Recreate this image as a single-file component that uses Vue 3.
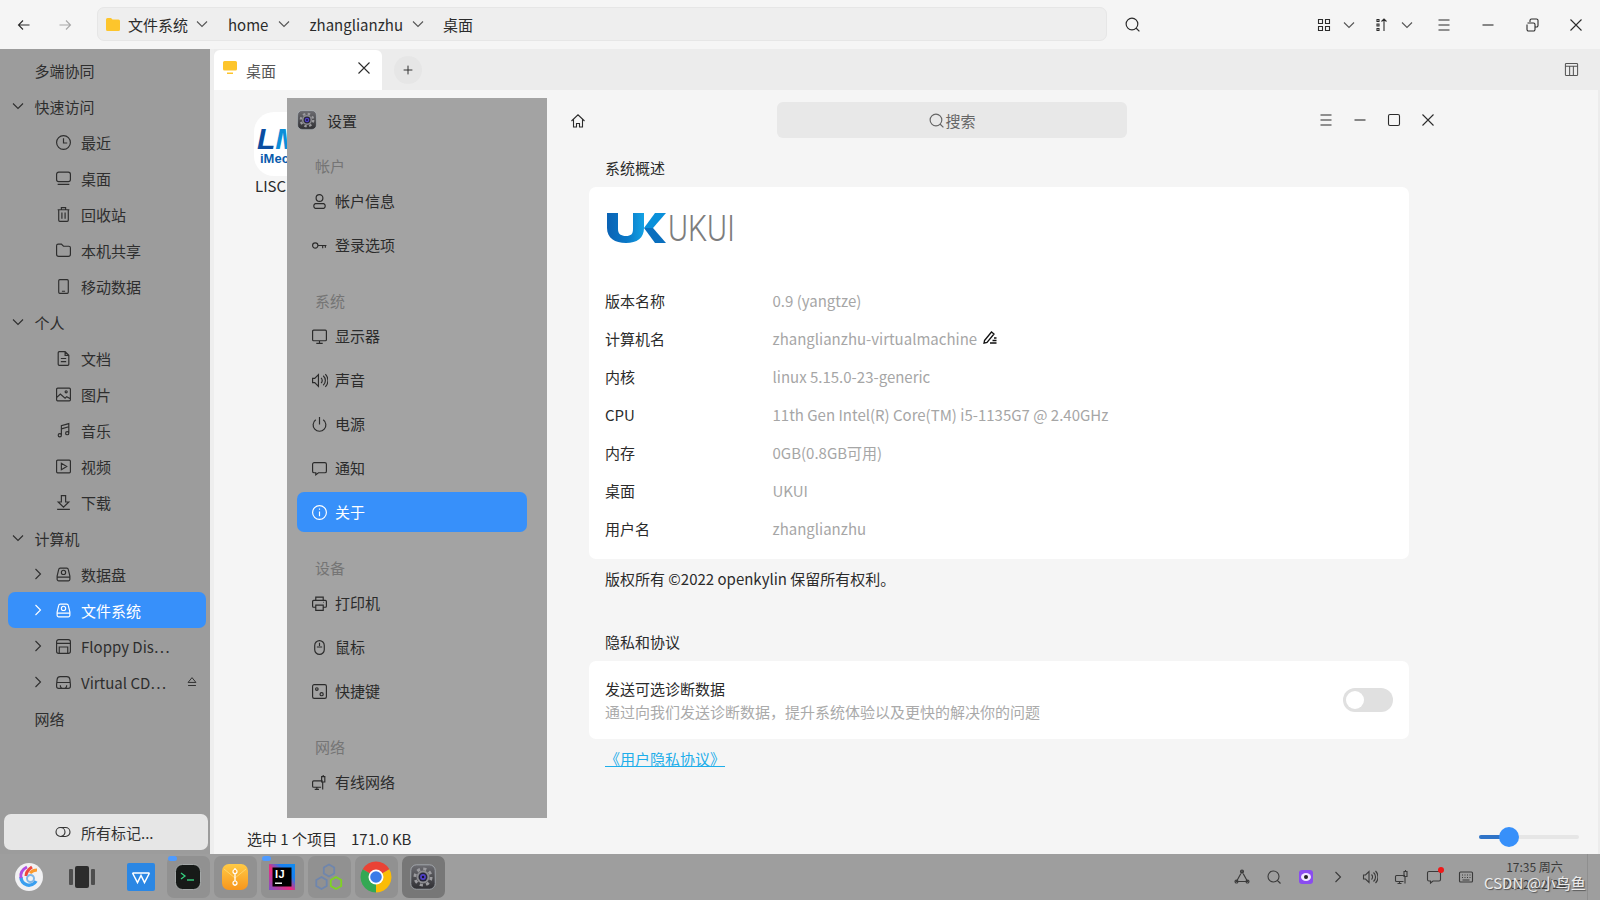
<script setup>
const icons = {
  back: 'M13.5 8H2.5M7 3.5L2.5 8L7 12.5',
  fwd: 'M2.5 8H13.5M9 3.5L13.5 8L9 12.5',
  down: 'M3 5.5l5 5 5-5',
  right: 'M5.5 3l5 5-5 5',
  close: 'M2.5 2.5l11 11M13.5 2.5l-11 11',
  menu: 'M2.5 3h11M2.5 8h11M2.5 13h11',
  min: 'M2.5 8h11',
  max: 'M4 2.5h8a1.5 1.5 0 0 1 1.5 1.5v8a1.5 1.5 0 0 1-1.5 1.5H4A1.5 1.5 0 0 1 2.5 12V4A1.5 1.5 0 0 1 4 2.5z',
  restore: 'M3.5 6h6a1.5 1.5 0 0 1 1.5 1.5v5A1.5 1.5 0 0 1 9.500 14h-5A1.500 1.500 0 0 1 3 12.500V7.500M6 5V3.500A1.500 1.500 0 0 1 7.500 2h5A1.500 1.500 0 0 1 14 3.500v5a1.500 1.500 0 0 1-1.500 1.500H11',
  search: 'M7.500 2a5.500 5.500 0 1 0 0 11a5.500 5.500 0 1 0 0-11M11.500 11.500L14.500 14.500',
  grid: 'M2.500 2.500h4v4h-4zM9.500 2.500h4v4h-4zM2.500 9.500h4v4h-4zM9.500 9.500h4v4h-4z',
  sort: 'M3 2.500h2v2H3zM3 7h2v2H3zM3 11.500h2v2H3zM10 14V2M7.500 4.500L10 2l2.500 2.500',
  plus: 'M8 3v10M3 8h10',
  columns: 'M2.500 1.500h11a1 1 0 0 1 1 1v11a1 1 0 0 1-1 1h-11a1 1 0 0 1-1-1v-11a1 1 0 0 1 1-1zM1.500 4.500h13M6 4.500v10M10 4.500v10',
  clock: 'M8 1.500a6.500 6.500 0 1 0 0 13a6.500 6.500 0 1 0 0-13M8 4v4.500h3.500',
  desktop: 'M3.500 2h9a2 2 0 0 1 2 2v5a2 2 0 0 1-2 2h-9a2 2 0 0 1-2-2V4a2 2 0 0 1 2-2zM2.500 13.500h11',
  trash: 'M2.500 3.500h11M6 3V1.500h4V3M3.500 3.500v10a1 1 0 0 0 1 1h7a1 1 0 0 0 1-1v-10M6.500 6v6M9.500 6v6',
  folder: 'M1.500 3.500A1.500 1.500 0 0 1 3 2h3l2 2h5a1.500 1.500 0 0 1 1.500 1.500v6a2 2 0 0 1-2 2h-9a2 2 0 0 1-2-2z',
  phone: 'M4.500 1.500h7a1 1 0 0 1 1 1v11a1 1 0 0 1-1 1h-7a1 1 0 0 1-1-1v-11a1 1 0 0 1 1-1zM6.500 12.500h3',
  doc: 'M3 2.500a1 1 0 0 1 1-1h5.500l3.500 3.500v8.500a1 1 0 0 1-1 1H4a1 1 0 0 1-1-1zM9.500 1.500V5H13M5.500 8h5M5.500 11h5',
  image: 'M2.500 2h11a1 1 0 0 1 1 1v10a1 1 0 0 1-1 1h-11a1 1 0 0 1-1-1V3a1 1 0 0 1 1-1zM1.500 11l3.500-3.500 4.500 4 1.500-1.500 3.500 2M10.500 4.500a1 1 0 1 0 0 2a1 1 0 1 0 0-2',
  music: 'M6 12.500V3.500l7-2v9M6 6.500l7-2M6 12.500a1.500 1.500 0 1 1-3 0a1.500 1.500 0 1 1 3 0M13 10.500a1.500 1.500 0 1 1-3 0a1.500 1.500 0 1 1 3 0',
  video: 'M2.500 2h11a1 1 0 0 1 1 1v10a1 1 0 0 1-1 1h-11a1 1 0 0 1-1-1V3a1 1 0 0 1 1-1zM6 5v6l5-3z',
  download: 'M6 1.500h4v6h3l-5 5-5-5h3zM2 14.500h12',
  disk: 'M5 2h6a1.500 1.500 0 0 1 1.500 1.200L14 9.500v3a1.500 1.500 0 0 1-1.500 1.500h-9A1.500 1.500 0 0 1 2 12.500v-3l1.500-6.300A1.500 1.500 0 0 1 5 2zM2 10.500h12M8 4a2 2 0 1 0 0 4a2 2 0 1 0 0-4',
  floppy: 'M3.500 1.500h9a2 2 0 0 1 2 2v9a2 2 0 0 1-2 2h-9a2 2 0 0 1-2-2v-9a2 2 0 0 1 2-2zM1.500 5h13M4 14.500V8.500h8v6',
  cd: 'M5 2.500h6a3 3 0 0 1 3 2.500l.5 5v1.500a2 2 0 0 1-2 2h-9a2 2 0 0 1-2-2V10l.5-5A3 3 0 0 1 5 2.500zM1.500 8h13M5 10.500a3 3 0 0 0 6 0',
  eject: 'M8 3l4.500 5.500h-9zM3.500 12h9',
  tags: 'M5.500 3.500h5a4.500 4.500 0 0 1 0 9h-5a4.500 4.500 0 0 1 0-9M5.500 3.500a4.500 4.500 0 0 1 0 9',
  user: 'M8 1.500a3.200 3.200 0 1 0 0 6.400a3.200 3.200 0 1 0 0-6.400M4 10h8a2.500 2.500 0 0 1 0 4.500H4A2.500 2.500 0 0 1 4 10z',
  key: 'M4 5.500a2.500 2.500 0 1 0 0 5a2.500 2.500 0 1 0 0-5M6.500 8h8M11 8v2.500M13.500 8v2',
  monitor: 'M2.500 2h11a1 1 0 0 1 1 1v8a1 1 0 0 1-1 1h-11a1 1 0 0 1-1-1V3a1 1 0 0 1 1-1zM8 12v2M5 14.500h6',
  sound: 'M1.500 6h2l3.500-3.500v11L3.500 10h-2zM9.500 5.500a3.500 3.500 0 0 1 0 5M11.500 3.500a6 6 0 0 1 0 9M13.500 2a8.500 8.500 0 0 1 0 12',
  power: 'M8 1v7M4.500 3.500a6 6 0 1 0 7 0',
  message: 'M3 2.500h10a1.500 1.500 0 0 1 1.500 1.500v6.500a1.500 1.500 0 0 1-1.500 1.500H7l-2.500 2v-2H3a1.500 1.500 0 0 1-1.500-1.500V4A1.500 1.500 0 0 1 3 2.500z',
  info: 'M8 1.500a6.500 6.500 0 1 0 0 13a6.500 6.500 0 1 0 0-13M8 7v4.500M8 4.300v1',
  printer: 'M4.500 5V2h7v3M4.500 11.500h-2a1 1 0 0 1-1-1V6a1 1 0 0 1 1-1h11a1 1 0 0 1 1 1v4.500a1 1 0 0 1-1 1h-2M4.500 9.500h7v5h-7zM11.500 7h.5',
  mouse: 'M8 1.500a4.500 4.500 0 0 1 4.500 4.500v4a4.500 4.500 0 0 1-9 0V6A4.500 4.500 0 0 1 8 1.500zM8 3.500v3M5.500 7.500h5',
  shortcut: 'M3 1.500h10a1.500 1.500 0 0 1 1.500 1.500v10a1.500 1.500 0 0 1-1.500 1.500H3A1.500 1.500 0 0 1 1.500 13V3A1.500 1.500 0 0 1 3 1.500zM5.500 4.500a1.200 1.200 0 1 0 0 2.400a1.200 1.200 0 1 0 0-2.400M10 9a1.500 1.500 0 1 0 0 3a1.500 1.500 0 1 0 0-3',
  wired: 'M11 6.500H2.500a1 1 0 0 0-1 1v4a1 1 0 0 0 1 1h7M5.500 12.500v2M3.500 14.500h4M11 8v6.500M10 2.500h3v5h-3zM11.500 2.500V1',
  home: 'M1.500 8L8 1.800 14.500 8M3.500 6.500V14h3v-3.500h3V14h3V6.500',
  edit: 'M2.500 11.500l7-8.500 2.500 2-7 8.500-3 .7zM8 14h6.500M10.500 11.500h4M12 9h2.500',
  triangle: 'M8 2.500L2.500 12.500h11zM8 1a1.500 1.500 0 1 0 0 3a1.500 1.500 0 1 0 0-3M2.500 11a1.500 1.500 0 1 0 0 3a1.500 1.500 0 1 0 0-3M13.500 11a1.500 1.500 0 1 0 0 3a1.500 1.500 0 1 0 0-3',
  keyboard: 'M2.500 3h11a1 1 0 0 1 1 1v8a1 1 0 0 1-1 1h-11a1 1 0 0 1-1-1V4a1 1 0 0 1 1-1zM4 6h1M6.500 6h1M9 6h1M11.500 6h1M4 8.500h1M6.500 8.500h1M9 8.500h1M11.500 8.500h1M4.500 11h7'
}

const tree = [
  { t: '多端协同', level: 0 },
  { t: '快速访问', level: 0, chevron: 'down' },
  { t: '最近', level: 1, icon: 'clock' },
  { t: '桌面', level: 1, icon: 'desktop' },
  { t: '回收站', level: 1, icon: 'trash' },
  { t: '本机共享', level: 1, icon: 'folder' },
  { t: '移动数据', level: 1, icon: 'phone' },
  { t: '个人', level: 0, chevron: 'down' },
  { t: '文档', level: 1, icon: 'doc' },
  { t: '图片', level: 1, icon: 'image' },
  { t: '音乐', level: 1, icon: 'music' },
  { t: '视频', level: 1, icon: 'video' },
  { t: '下载', level: 1, icon: 'download' },
  { t: '计算机', level: 0, chevron: 'down' },
  { t: '数据盘', level: 1, icon: 'disk', chevron: 'right' },
  { t: '文件系统', level: 1, icon: 'disk', chevron: 'right', active: true },
  { t: 'Floppy Dis⋯', level: 1, icon: 'floppy', chevron: 'right' },
  { t: 'Virtual CD⋯', level: 1, icon: 'cd', chevron: 'right', eject: true },
  { t: '网络', level: 0 }
]

const groups = [
  { title: '帐户', items: [{ t: '帐户信息', icon: 'user' }, { t: '登录选项', icon: 'key' }] },
  { title: '系统', items: [
    { t: '显示器', icon: 'monitor' }, { t: '声音', icon: 'sound' }, { t: '电源', icon: 'power' },
    { t: '通知', icon: 'message' }, { t: '关于', icon: 'info', active: true }
  ] },
  { title: '设备', items: [{ t: '打印机', icon: 'printer' }, { t: '鼠标', icon: 'mouse' }, { t: '快捷键', icon: 'shortcut' }] },
  { title: '网络', items: [{ t: '有线网络', icon: 'wired' }] }
]

const rows = [
  ['版本名称', '0.9 (yangtze)'],
  ['计算机名', 'zhanglianzhu-virtualmachine', true],
  ['内核', 'linux 5.15.0-23-generic'],
  ['CPU', '11th Gen Intel(R) Core(TM) i5-1135G7 @ 2.40GHz'],
  ['内存', '0GB(0.8GB可用)'],
  ['桌面', 'UKUI'],
  ['用户名', 'zhanglianzhu']
]

const crumbs = ['home', 'zhanglianzhu']
const tray = ['triangle', 'search', null, 'right', 'sound', 'wired', 'message', 'keyboard']
</script>

<template>
  <div class="screen">
    <svg class="defs" aria-hidden="true">
      <defs>
        <linearGradient id="gearBg" x1="0" y1="0" x2="0" y2="1">
          <stop offset="0" stop-color="#6d6d72" />
          <stop offset="1" stop-color="#2f2f33" />
        </linearGradient>
        <linearGradient id="ukU" x1="0" y1="0" x2="1" y2="0">
          <stop offset="0" stop-color="#0a62b4" />
          <stop offset="0.55" stop-color="#0a79c8" />
          <stop offset="1" stop-color="#14a2e4" />
        </linearGradient>
        <linearGradient id="mailBg" x1="0" y1="0" x2="0" y2="1">
          <stop offset="0" stop-color="#ffca45" />
          <stop offset="1" stop-color="#f8961c" />
        </linearGradient>
        <linearGradient id="ijBg" x1="0" y1="1" x2="1" y2="0">
          <stop offset="0" stop-color="#7a52c8" />
          <stop offset="0.45" stop-color="#ee2a7b" />
          <stop offset="0.7" stop-color="#1a7ff0" />
          <stop offset="1" stop-color="#0d8cf2" />
        </linearGradient>
        <symbol id="gear" viewBox="0 0 32 32">
          <rect x="1" y="1" width="30" height="30" rx="7" fill="url(#gearBg)" stroke="#b9c0c8" stroke-width="0.8" />
          <circle cx="16" cy="16" r="10" fill="none" stroke="#9a9a9e" stroke-width="3.500" stroke-dasharray="3.900 3.950" />
          <circle cx="16" cy="16" r="8" fill="#8b8b8f" />
          <circle cx="16" cy="16" r="5.500" fill="#26263a" />
          <circle cx="16" cy="16" r="3.600" fill="#5040c8" />
          <circle cx="16" cy="16" r="1.500" fill="#16162a" />
        </symbol>
      </defs>
    </svg>

    <header class="topbar">
      <svg class="ic nav-back" viewBox="0 0 16 16"><path :d="icons.back" /></svg>
      <svg class="ic nav-fwd" viewBox="0 0 16 16"><path :d="icons.fwd" /></svg>
      <div class="address">
        <svg class="folder-y" viewBox="0 0 14 13">
          <path d="M1.500 0h3.500l1.500 1.500h6a1.500 1.500 0 0 1 1.500 1.500v8.500a1.500 1.500 0 0 1-1.500 1.500h-11A1.500 1.500 0 0 1 0 11.500v-10A1.500 1.500 0 0 1 1.500 0z" />
        </svg>
        <span class="crumb">文件系统</span>
        <svg class="ic chev first" viewBox="0 0 16 16"><path :d="icons.down" /></svg>
        <template v-for="c in crumbs" :key="c">
          <span class="crumb">{{ c }}</span>
          <svg class="ic chev" :class="{ wide: c === 'home' }" viewBox="0 0 16 16"><path :d="icons.down" /></svg>
        </template>
        <span class="crumb">桌面</span>
      </div>
      <svg class="ic top-search" viewBox="0 0 16 16"><path :d="icons.search" /></svg>
      <div class="top-tools">
        <div class="tool-pair">
          <svg class="ic" viewBox="0 0 16 16"><path :d="icons.grid" /></svg>
          <svg class="ic chev-soft" viewBox="0 0 16 16"><path :d="icons.down" /></svg>
        </div>
        <div class="tool-pair">
          <svg class="ic" viewBox="0 0 16 16"><path :d="icons.sort" /></svg>
          <svg class="ic chev-soft" viewBox="0 0 16 16"><path :d="icons.down" /></svg>
        </div>
        <div class="wm-btns">
          <svg class="ic" viewBox="0 0 16 16"><path :d="icons.menu" /></svg>
          <svg class="ic" viewBox="0 0 16 16"><path :d="icons.min" /></svg>
          <svg class="ic" viewBox="0 0 16 16"><path :d="icons.restore" /></svg>
          <svg class="ic" viewBox="0 0 16 16"><path :d="icons.close" /></svg>
        </div>
      </div>
    </header>

    <div class="middle">
      <aside class="files">
        <div
          v-for="r in tree"
          :key="r.t"
          class="node"
          :class="[`level-${r.level}`, { active: r.active }]"
        >
          <svg v-if="r.chevron" class="ic node-chev" viewBox="0 0 16 16"><path :d="icons[r.chevron]" /></svg>
          <span v-else class="node-chev"></span>
          <svg v-if="r.icon" class="ic node-icon" viewBox="0 0 16 16"><path :d="icons[r.icon]" /></svg>
          <span class="node-text">{{ r.t }}</span>
          <svg v-if="r.eject" class="ic node-eject" viewBox="0 0 16 16"><path :d="icons.eject" /></svg>
        </div>
        <div class="tags-btn">
          <svg class="ic" viewBox="0 0 16 16"><path :d="icons.tags" /></svg>
          <span>所有标记...</span>
        </div>
      </aside>

      <main class="pane">
        <div class="tabs">
          <div class="tab">
            <svg class="tab-folder" viewBox="0 0 14 13">
              <path d="M1.500 0h11A1.500 1.500 0 0 1 14 1.500v6.500a1.500 1.500 0 0 1-1.500 1.500h-11A1.500 1.500 0 0 1 0 8V1.500A1.500 1.500 0 0 1 1.500 0zM4 11.500h6V13H4z" />
            </svg>
            <span class="tab-text">桌面</span>
            <svg class="ic tab-close" viewBox="0 0 16 16"><path :d="icons.close" /></svg>
          </div>
          <div class="tab-add">
            <svg class="ic" viewBox="0 0 16 16"><path :d="icons.plus" /></svg>
          </div>
          <svg class="ic tab-columns" viewBox="0 0 16 16"><path :d="icons.columns" /></svg>
        </div>
        <div class="canvas">
          <div class="file">
            <svg class="file-icon" viewBox="0 0 64 64">
              <rect width="64" height="64" rx="20" fill="#fff" />
              <text x="3" y="37" class="lm-text">L<tspan fill="#0d8fd8">M</tspan></text>
              <text x="6" y="51" class="imec-text">iMech</text>
            </svg>
            <span class="file-name">LISC</span>
          </div>
        </div>
        <div class="status">
          <span>选中 1 个项目</span>
          <span class="status-size">171.0 KB</span>
          <div class="slider">
            <div class="slider-fill"></div>
            <div class="slider-thumb"></div>
          </div>
        </div>
      </main>
    </div>

    <footer class="taskbar">
      <div class="task-start">
        <svg width="28" height="28" viewBox="0 0 28 28">
          <circle cx="14" cy="14" r="14" fill="#f1f1f3" />
          <path d="M6 14a8 8 0 0 0 15 4" fill="none" stroke="#3a9ff0" stroke-width="3.500" />
          <path d="M6 15C5 10 8 6 12 4" fill="none" stroke="#b04ee0" stroke-width="3" />
          <path d="M11 13c0-4 3-7 6-9" fill="none" stroke="#f0483e" stroke-width="3" />
          <path d="M15 10c2-2 5-3 7-3" fill="none" stroke="#fb9a2e" stroke-width="3" />
          <circle cx="15.500" cy="15.500" r="3.500" fill="none" stroke="#7fb7e8" stroke-width="2" />
        </svg>
      </div>
      <div class="task-multi">
        <span class="multi-side"></span>
        <span class="multi-mid"></span>
        <span class="multi-side"></span>
      </div>
      <div class="slot">
        <svg width="28" height="28" viewBox="0 0 28 28">
          <rect width="28" height="28" rx="2" fill="#2b87e4" />
          <path d="M5.500 10h17M5.500 10L10.500 19.500L14 12.500L17.500 19.500L22.500 10" fill="none" stroke="#fff" stroke-width="1.500" />
        </svg>
      </div>
      <div class="slot filled dot">
        <svg width="26" height="26" viewBox="0 0 26 26">
          <rect x="0.500" y="0.500" width="25" height="25" rx="7" fill="#171a18" stroke="#b8bcbc" stroke-width="0.800" />
          <path d="M6 9l4 3-4 3" fill="none" stroke="#35d07f" stroke-width="1.300" />
          <path d="M12 16h7" stroke="#35d07f" stroke-width="1.400" />
        </svg>
      </div>
      <div class="slot filled">
        <svg width="26" height="26" viewBox="0 0 26 26">
          <rect width="26" height="26" rx="7" fill="url(#mailBg)" />
          <path d="M2 5l11 9 11-9" fill="none" stroke="#ffd976" stroke-width="0.800" />
          <path d="M13 4v18" stroke="#fff" stroke-width="1.300" />
          <circle cx="13" cy="7.500" r="2" fill="#f8a52a" stroke="#fff" stroke-width="1.200" />
          <circle cx="13" cy="19" r="2" fill="#f8a52a" stroke="#fff" stroke-width="1.200" />
        </svg>
      </div>
      <div class="slot filled dot">
        <svg width="26" height="26" viewBox="0 0 26 26">
          <rect width="26" height="26" fill="url(#ijBg)" />
          <rect x="3.500" y="3.500" width="19" height="19" fill="#000" />
          <text x="6" y="14" class="ij-text">IJ</text>
          <rect x="6" y="18.500" width="7" height="1.400" fill="#fff" />
        </svg>
      </div>
      <div class="slot filled">
        <svg width="30" height="30" viewBox="0 0 30 30" fill="none" stroke-width="1.800">
          <path d="M15 2.500l5.200 3v6L15 14.500l-5.200-3v-6z" stroke="#6f86ad" />
          <path d="M7.500 15l5.200 3v6L7.500 27l-5.200-3v-6z" stroke="#6f86ad" />
          <path d="M22 15l5.200 3v6L22 27l-5.200-3v-6z" stroke="#7ed321" />
        </svg>
      </div>
      <div class="slot filled">
        <svg width="32" height="32" viewBox="0 0 32 32">
          <path d="M2.600 8.250A15.500 15.500 0 0 1 29.400 8.250L16 16z" fill="#ea4335" />
          <path d="M29.400 8.250A15.500 15.500 0 0 1 16 31.500L16 16z" fill="#fbbc05" />
          <path d="M16 31.500A15.500 15.500 0 0 1 2.600 8.250L16 16z" fill="#34a853" />
          <circle cx="16" cy="16" r="7.500" fill="#fff" />
          <circle cx="16" cy="16" r="5.800" fill="#3b7ce8" />
        </svg>
      </div>
      <div class="slot filled current">
        <svg width="26" height="26"><use href="#gear" /></svg>
      </div>

      <div class="tray">
        <div v-for="(t, i) in tray" :key="i" class="tray-item" :class="{ badge: t === 'message' }">
          <svg v-if="t" class="ic" viewBox="0 0 16 16"><path :d="icons[t]" /></svg>
          <svg v-else width="14" height="14" viewBox="0 0 14 14">
            <rect width="14" height="14" rx="3" fill="#8a4cf0" />
            <ellipse cx="7" cy="7" rx="5" ry="4" fill="#f0e6ff" />
            <circle cx="7" cy="7" r="2" fill="#222" />
          </svg>
        </div>
      </div>
      <div class="clock">
        <span>17:35 周六</span>
        <span>2022/12/24</span>
      </div>
      <span class="watermark">CSDN @小鸟鱼</span>
    </footer>

    <section class="settings">
      <nav class="set-nav">
        <div class="set-head">
          <svg width="20" height="20"><use href="#gear" /></svg>
          <span>设置</span>
        </div>
        <div v-for="g in groups" :key="g.title" class="set-group">
          <div class="set-title">{{ g.title }}</div>
          <div v-for="it in g.items" :key="it.t" class="set-item" :class="{ active: it.active }">
            <svg class="ic" viewBox="0 0 16 16"><path :d="icons[it.icon]" /></svg>
            <span>{{ it.t }}</span>
          </div>
        </div>
      </nav>
      <div class="set-main">
        <div class="set-bar">
          <svg class="ic" viewBox="0 0 16 16"><path :d="icons.home" /></svg>
          <div class="set-search">
            <svg class="ic" viewBox="0 0 16 16"><path :d="icons.search" /></svg>
            <span>搜索</span>
          </div>
          <div class="set-wm">
            <svg class="ic" viewBox="0 0 16 16"><path :d="icons.menu" /></svg>
            <svg class="ic" viewBox="0 0 16 16"><path :d="icons.min" /></svg>
            <svg class="ic" viewBox="0 0 16 16"><path :d="icons.max" /></svg>
            <svg class="ic" viewBox="0 0 16 16"><path :d="icons.close" /></svg>
          </div>
        </div>
        <div class="set-body">
          <h2 class="sec-title first">系统概述</h2>
          <div class="card info-card">
            <div class="logo">
              <svg width="59" height="30" viewBox="0 0 59 30">
                <path d="M0 0h11v16c0 5 3 7 8 7s7-2 7-7V0h11v15C37 25 30 30 19 30S0 25 0 15z" fill="url(#ukU)" />
                <path d="M37 15L48 0h11L46 15z" fill="#0a90da" />
                <path d="M37 15h9l13 15H48z" fill="#0a6fbe" />
              </svg>
              <svg width="90" height="36" viewBox="0 0 90 36">
                <text x="1" y="27.500" textLength="67" lengthAdjust="spacingAndGlyphs" class="logo-text">UKUI</text>
              </svg>
            </div>
            <div v-for="r in rows" :key="r[0]" class="info-row">
              <span class="info-label">{{ r[0] }}</span>
              <span class="info-value">{{ r[1] }}</span>
              <svg v-if="r[2]" class="ic info-edit" viewBox="0 0 16 16"><path :d="icons.edit" /></svg>
            </div>
          </div>
          <p class="copyright">版权所有 ©2022 openkylin 保留所有权利。</p>
          <h2 class="sec-title second">隐私和协议</h2>
          <div class="card privacy">
            <div>
              <div class="privacy-title">发送可选诊断数据</div>
              <div class="privacy-sub">通过向我们发送诊断数据，提升系统体验以及更快的解决你的问题</div>
            </div>
            <div class="toggle"><span class="knob"></span></div>
          </div>
          <a class="policy">《用户隐私协议》</a>
        </div>
      </div>
    </section>
  </div>
</template>

<style>
html, body { margin: 0; padding: 0; }
</style>

<style scoped>
.screen {
  position: relative;
  width: 1600px;
  height: 900px;
  overflow: hidden;
  display: flex;
  flex-direction: column;
  background: #f5f5f5;
  color: #2b2b2b;
  font-family: "Noto Sans CJK SC", "Noto Sans", sans-serif;
  font-size: 15px;
}
.defs { position: absolute; width: 0; height: 0; }
.ic {
  width: 16px;
  height: 16px;
  flex: none;
  fill: none;
  stroke: currentColor;
  stroke-width: 1.1;
}

/* top bar */
.topbar {
  height: 49px;
  flex: none;
  display: flex;
  align-items: center;
  padding-left: 16px;
  padding-right: 16px;
  box-sizing: border-box;
}
.nav-fwd { margin-left: 25px; color: #a8a8a8; }
.address {
  width: 1010px;
  height: 34px;
  margin-left: 24px;
  margin-top: -1px;
  box-sizing: border-box;
  display: flex;
  align-items: center;
  padding-left: 8px;
  background: #eeeeee;
  border: 1px solid #e6e6e6;
  border-radius: 7px;
}
.folder-y { width: 14px; height: 13px; fill: #fdc52c; margin-right: 8px; }
.crumb { color: #2b2b2b; line-height: 20px; margin-top: 1px; }
.chev { margin: 0 17px 0 7px; color: #555; }
.chev.first { margin: 0 18px 0 6px; }
.chev.wide { margin-left: 8px; }
.top-search { margin-left: 17px; width: 17px; height: 17px; }
.top-tools { margin-left: auto; display: flex; align-items: center; }
.tool-pair { display: flex; gap: 9px; margin-right: 17px; }
.chev-soft { color: #555; }
.wm-btns { display: flex; gap: 28px; margin-left: 4px; }

.middle { flex: 1; min-height: 0; display: flex; }

/* file sidebar */
.files {
  width: 210px;
  flex: none;
  box-sizing: border-box;
  padding-top: 3px;
  display: flex;
  flex-direction: column;
  background: #9c9c9c;
  color: #2e2e2e;
}
.node {
  height: 36px;
  flex: none;
  margin: 0 4px 0 8px;
  border-radius: 7px;
  display: flex;
  align-items: center;
  box-sizing: border-box;
}
.node-chev { width: 16px; flex: none; }
.level-0 { padding-left: 2px; }
.level-0 .node-text { margin-left: 8.5px; }
.level-1 { padding-left: 22px; }
.node-icon { margin-left: 8.5px; width: 17px; height: 17px; }
.level-1 .node-text { margin-left: 9.5px; }
.node-eject { margin-left: auto; margin-right: 7px; width: 14px; height: 14px; }
.node.active { background: #3790fa; color: #fff; }
.tags-btn {
  margin: auto 2px 4px 4px;
  height: 36px;
  flex: none;
  display: flex;
  align-items: center;
  gap: 10px;
  padding-left: 51px;
  box-sizing: border-box;
  background: #e6e6e6;
  border-radius: 7px;
  color: #333;
}

/* file pane */
.pane {
  flex: 1;
  min-width: 0;
  display: flex;
  flex-direction: column;
  border-left: 4px solid #eeeeee;
  border-right: 2px solid #ececec;
}
.tabs {
  height: 41px;
  flex: none;
  display: flex;
  align-items: center;
  background: #ececec;
}
.tab {
  width: 168px;
  height: 40px;
  margin-top: 1px;
  display: flex;
  align-items: center;
  box-sizing: border-box;
  padding-left: 9px;
  background: #fff;
  border-radius: 6px 6px 0 0;
  align-self: flex-end;
}
.tab-folder { width: 14px; height: 13px; fill: #fdc52c; margin-top: -6px; }
.tab-text { margin-left: 9px; color: #555; }
.tab-close { margin-left: auto; margin-right: 10px; margin-top: -4px; }
.tab-add {
  width: 28px;
  height: 28px;
  margin-left: 12px;
  border-radius: 50%;
  background: #e6e6e6;
  display: flex;
  align-items: center;
  justify-content: center;
}
.tab-add .ic { width: 14px; height: 14px; }
.tab-columns { margin-left: auto; margin-right: 19px; color: #555; width: 15px; height: 15px; }
.canvas { flex: 1; min-height: 0; padding: 22px 0 0 40px; }
.file { display: flex; flex-direction: column; width: 64px; }
.file-icon { width: 64px; height: 64px; display: block; }
.file-name { margin-top: -1px; padding-left: 1px; line-height: 22px; color: #2b2b2b; }
.lm-text { font: italic 700 30px "Liberation Sans", sans-serif; fill: #0b4ea2; }
.imec-text { font: 700 13px "Liberation Sans", sans-serif; fill: #0b5cad; }
.status {
  height: 31px;
  flex: none;
  display: flex;
  align-items: center;
  padding-left: 33px;
}
.status-size { margin-left: 14px; }
.slider {
  position: relative;
  width: 100px;
  height: 4px;
  margin-left: auto;
  margin-right: 19px;
  margin-top: -4px;
  border-radius: 2px;
  background: #e6e6e6;
}
.slider-fill { width: 30px; height: 100%; border-radius: 2px; background: #2f74c8; }
.slider-thumb {
  position: absolute;
  left: 20px;
  top: -8px;
  width: 20px;
  height: 20px;
  border-radius: 50%;
  background: #3790fa;
}

/* taskbar */
.taskbar {
  position: relative;
  height: 46px;
  flex: none;
  display: flex;
  align-items: center;
  gap: 4px;
  background: #9e9e9e;
}
.task-start { width: 58px; flex: none; display: flex; justify-content: center; margin-right: -4px; }
.task-multi {
  width: 46px;
  flex: none;
  box-sizing: border-box;
  padding-left: 2px;
  display: flex;
  align-items: center;
  justify-content: center;
  gap: 2px;
  margin-right: 12px;
}
.multi-side { width: 4px; height: 16px; background: #4e4e4e; border-radius: 1px; }
.multi-mid { width: 14px; height: 22px; background: #2c2c2c; border-radius: 2px; }
.slot {
  position: relative;
  width: 43px;
  height: 42px;
  flex: none;
  box-sizing: border-box;
  padding-right: 1px;
  display: flex;
  align-items: center;
  justify-content: center;
  border-radius: 7px;
}
.slot.filled { background: #919191; }
.slot.current { background: #777777; }
.slot.dot::before {
  content: "";
  position: absolute;
  left: 1px;
  top: 0;
  width: 9px;
  height: 5px;
  border-radius: 3px;
  background: #4f9bff;
}
.ij-text { font: 700 11px "Liberation Sans", sans-serif; fill: #fff; letter-spacing: 0.5px; }
.tray { display: flex; margin-left: auto; }
.tray-item {
  position: relative;
  width: 32px;
  display: flex;
  justify-content: center;
  align-items: center;
  color: #3a3a3a;
}
.tray-item.badge::after {
  content: "";
  position: absolute;
  left: 20px;
  top: -2px;
  width: 6px;
  height: 6px;
  border-radius: 50%;
  background: #f01818;
}
.clock {
  width: 106px;
  margin-right: 12px;
  margin-left: -4px;
  flex: none;
  box-sizing: border-box;
  padding-bottom: 5px;
  display: flex;
  flex-direction: column;
  align-items: center;
  font-size: 12px;
  line-height: 17px;
  color: #3a3a3a;
  border-right: 1px solid #8f8f8f;
  height: 46px;
  justify-content: center;
}
.watermark {
  position: absolute;
  left: 1484px;
  top: 19px;
  font-size: 15px;
  line-height: 20px;
  color: #ececec;
  text-shadow: 1px 1px 1px #555;
  white-space: nowrap;
}

/* settings window */
.settings {
  position: absolute;
  left: 287px;
  top: 98px;
  width: 1160px;
  height: 720px;
  display: flex;
  background: #f5f5f5;
}
.set-nav { width: 260px; flex: none; background: #a3a3a3; color: #2b2b2b; }
.set-head {
  height: 44px;
  padding-left: 10px;
  display: flex;
  align-items: center;
  gap: 10px;
  margin-bottom: 9px;
}
.set-group { padding-bottom: 17px; }
.set-title { height: 30px; line-height: 30px; padding-left: 28px; color: #757575; }
.set-item {
  width: 230px;
  height: 40px;
  margin: 0 0 4px 10px;
  padding-left: 14px;
  box-sizing: border-box;
  display: flex;
  align-items: center;
  gap: 8px;
  border-radius: 7px;
}
.set-item span { margin-top: -2px; }
.set-item .ic { width: 17px; height: 17px; margin-left: -0.5px; margin-right: -0.5px; }
.set-item.active { background: #3790fa; color: #fff; }
.set-main { flex: 1; min-width: 0; }
.set-bar {
  height: 44px;
  display: flex;
  align-items: center;
  padding-left: 23px;
}
.set-search {
  width: 350px;
  height: 36px;
  margin-left: 191px;
  display: flex;
  align-items: center;
  justify-content: center;
  background: #e8e8e8;
  border-radius: 6px;
  color: #666;
}
.set-search .ic { width: 17px; height: 17px; }
.set-bar > .ic { margin-top: 1px; }
.set-wm { display: flex; gap: 18px; margin-left: 191px; }
.set-body { padding-left: 42px; width: 820px; }
.sec-title {
  margin: 0 0 7px;
  padding-left: 16px;
  font-size: 15px;
  font-weight: 400;
  line-height: 24px;
  color: #2b2b2b;
}
.sec-title.first { margin-top: 14px; }
.sec-title.second { margin-top: 39px; }
.card { background: #fff; border-radius: 7px; }
.info-card { padding: 26px 16px 11px; height: 372px; box-sizing: border-box; }
.logo { height: 30px; display: flex; gap: 1px; margin-bottom: 38px; margin-left: 2px; }
.logo-text { font: 300 36px Roboto, sans-serif; fill: #7d7d7d; }
.info-row { height: 38px; display: flex; align-items: center; }
.info-label { width: 167.5px; flex: none; color: #2b2b2b; }
.info-value { color: #a6a6a6; }
.info-edit { margin-left: 5px; color: #111; margin-top: -3px; stroke-width: 1.3; }
.copyright { margin: 8px 0 0; padding-left: 16px; line-height: 24px; color: #2b2b2b; }
.privacy {
  height: 78px;
  box-sizing: border-box;
  padding: 16px 16px 0;
  display: flex;
  justify-content: space-between;
}
.privacy-title { line-height: 24px; color: #2b2b2b; }
.privacy-sub { line-height: 23px; margin-top: -1px; color: #aaa; }
.toggle {
  width: 50px;
  height: 24px;
  margin-top: 11px;
  margin-right: 0;
  border-radius: 12px;
  background: #e0e0e0;
  display: flex;
  align-items: center;
  padding-left: 3px;
  box-sizing: border-box;
}
.knob { width: 18px; height: 18px; border-radius: 50%; background: #fff; }
.policy {
  display: inline-block;
  margin: 8px 0 0 16px;
  line-height: 24px;
  color: #1eaeea;
  text-decoration: underline;
}
</style>
